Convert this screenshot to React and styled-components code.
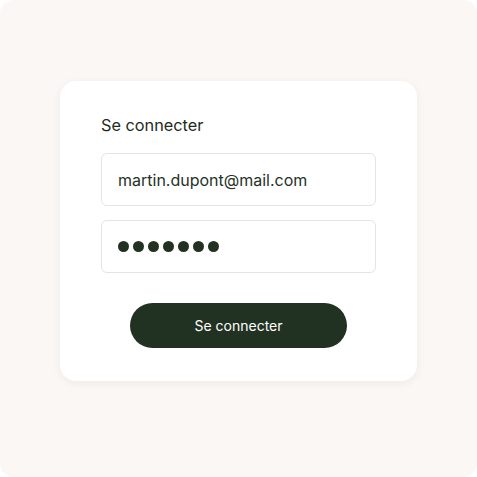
import React from "react";
import styled, { createGlobalStyle } from "styled-components";

const GlobalStyle = createGlobalStyle`
  html, body {
    margin: 0;
    padding: 0;
    background: #ffffff;
  }
  * {
    box-sizing: border-box;
  }
`;

const Page = styled.div`
  width: 477px;
  height: 477px;
  background: #faf7f5;
  border-radius: 14px;
  display: flex;
  align-items: flex-start;
  justify-content: center;
  padding-top: 81px;
  font-family: "Inter", "Noto Sans", sans-serif;
`;

const Card = styled.form`
  width: 357px;
  height: 300px;
  background: #ffffff;
  border-radius: 16px;
  box-shadow: 0 2px 10px rgba(60, 40, 30, 0.06);
  padding: 32px 41px 0 41px;
  display: flex;
  flex-direction: column;
`;

const Title = styled.h1`
  margin: 0 0 16px 0;
  font-size: 16.3px;
  line-height: 24px;
  font-weight: 400;
  color: #1f2b21;
`;

const Field = styled.div`
  height: 53px;
  border: 1px solid #e6e4e2;
  border-radius: 6px;
  display: flex;
  align-items: center;
  padding: 0 16px;
  margin-bottom: ${({ $gap = 0 }) => $gap}px;
  font-size: 16px;
  color: #243226;
`;

const Dots = styled.div`
  display: flex;
  gap: 4px;
`;

const Dot = styled.span`
  width: 11px;
  height: 11px;
  border-radius: 50%;
  background: #223222;
`;

const Button = styled.button`
  align-self: center;
  width: 217px;
  height: 45px;
  border: none;
  border-radius: 23px;
  background: #223222;
  color: #ffffff;
  font-family: inherit;
  font-size: 14px;
  cursor: pointer;
`;

export default function App() {
  return (
    <>
      <GlobalStyle />
      <Page>
        <Card>
          <Title>Se connecter</Title>
          <Field $gap={14}>martin.dupont@mail.com</Field>
          <Field $gap={30}>
            <Dots>
              {Array.from({ length: 7 }).map((_, i) => (
                <Dot key={i} />
              ))}
            </Dots>
          </Field>
          <Button type="button">Se connecter</Button>
        </Card>
      </Page>
    </>
  );
}
